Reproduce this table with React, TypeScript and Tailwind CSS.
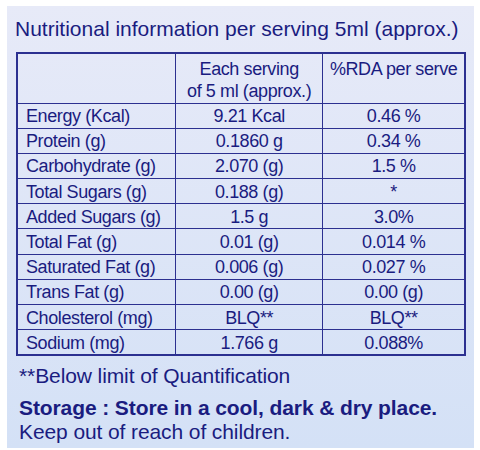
import React from "react";

const rows: [string, string, string][] = [
  ["Energy (Kcal)", "9.21 Kcal", "0.46 %"],
  ["Protein (g)", "0.1860 g", "0.34 %"],
  ["Carbohydrate (g)", "2.070 (g)", "1.5 %"],
  ["Total Sugars (g)", "0.188 (g)", "*"],
  ["Added Sugars (g)", "1.5 g", "3.0%"],
  ["Total Fat (g)", "0.01 (g)", "0.014 %"],
  ["Saturated Fat (g)", "0.006 (g)", "0.027 %"],
  ["Trans Fat (g)", "0.00 (g)", "0.00 (g)"],
  ["Cholesterol (mg)", "BLQ**", "BLQ**"],
  ["Sodium (mg)", "1.766 g", "0.088%"],
];

export default function App() {
  return (
    <div className="w-[480px] h-[450px] bg-white pt-[6px] pl-[7px]" style={{ fontFamily: '"Liberation Sans", Arial, sans-serif' }}>
      <div className="w-[467px] h-[442px] bg-gradient-to-b from-[#e7eaf8] to-[#d4e1f6] text-[#1a1c80] pl-[9px] pt-[10px] flex flex-col">
        <div className="text-[21px] leading-[26px] -ml-[1px]">Nutritional information per serving 5ml (approx.)</div>
        <table className="mt-[10px] border-collapse border-2 border-[#2c3090] text-[18px] tracking-[-0.4px] leading-[20px] w-[450px]">
          <colgroup>
            <col className="w-[159px]" />
            <col className="w-[148px]" />
            <col className="w-[143px]" />
          </colgroup>
          <tbody>
            <tr className="h-[50px]">
              <td className="border-[1.5px] border-[#2c3090]"></td>
              <td className="border-[1.5px] border-[#2c3090] text-center align-top pt-[4px] leading-[22px]">
                Each serving<br />of 5 ml (approx.)
              </td>
              <td className="border-[1.5px] border-[#2c3090] text-center align-top pt-[4px] leading-[22px]">%RDA per serve</td>
            </tr>
            {rows.map((r) => (
              <tr key={r[0]} className="h-[25.2px]">
                <td className="border-[1.5px] border-[#2c3090] pl-[8px] pt-[1px]">{r[0]}</td>
                <td className="border-[1.5px] border-[#2c3090] text-center pt-[1px]">{r[1]}</td>
                <td className="border-[1.5px] border-[#2c3090] text-center pt-[1px]">{r[2]}</td>
              </tr>
            ))}
          </tbody>
        </table>
        <div className="mt-[7px] pl-[3px] text-[21px] tracking-[-0.1px] leading-[25px]">**Below limit of Quantification</div>
        <div className="mt-[8px] pl-[3px] text-[21px] tracking-[-0.1px] leading-[24px] font-bold">Storage : Store in a cool, dark &amp; dry place.</div>
        <div className="pl-[3px] text-[21px] tracking-[-0.1px] leading-[24px]">Keep out of reach of children.</div>
      </div>
    </div>
  );
}
